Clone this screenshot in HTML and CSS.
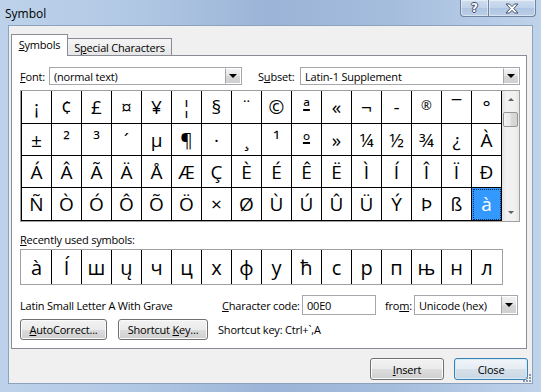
FILE: index.html
```html
<!DOCTYPE html>
<html lang="en">
<head>
    <meta charset="UTF-8">
    <meta name="viewport" content="width=device-width, initial-scale=1.0">
    <title>Symbol</title>
    <link rel="stylesheet" href="styles.css">
</head>
<body>
    <div class="window">

        <div class="titlebar">
            <span class="title">Symbol</span>
            <div class="caption-btns">
                <span class="cap help">?</span>
                <span class="cap close">
                    <svg width="14" height="11" viewBox="0 0 14 11">
                        <path d="M1 1h3.5L7 3.6 9.5 1H13L8.8 5.5 13 10H9.5L7 7.4 4.5 10H1l4.2-4.5z" fill="#fff" stroke="#3e4d66" stroke-width="1"/>
                    </svg>
                </span>
            </div>
        </div>

        <div class="client">
            <div class="tabs">
                <span class="tab active"><u>S</u>ymbols</span>
                <span class="tab">S<u>p</u>ecial Characters</span>
            </div>

            <div class="panel">
                <div class="font-row">
                    <span class="font-lbl"><u>F</u>ont:</span>
                    <div class="combo font-combo"><span>(normal text)</span><span class="drop"></span></div>
                    <span class="subset-lbl">S<u>u</u>bset:</span>
                    <div class="combo subset-combo"><span>Latin-1 Supplement</span><span class="drop"></span></div>
                </div>

                <div class="charmap">
                    <div class="cells">
                        <!-- fila 1 -->
                        <span>¡</span><span>¢</span><span>£</span><span>¤</span><span>¥</span><span>¦</span><span>§</span><span>¨</span>
                        <span>©</span><span class="ord">ª</span><span>«</span><span>¬</span><span>-</span><span class="small">®</span><span>¯</span><span>°</span>
                        <!-- fila 2 -->
                        <span>±</span><span>²</span><span>³</span><span>´</span><span>µ</span><span>¶</span><span>·</span><span>¸</span>
                        <span>¹</span><span class="ord">º</span><span>»</span><span>¼</span><span>½</span><span>¾</span><span>¿</span><span>À</span>
                        <!-- fila 3 -->
                        <span>Á</span><span>Â</span><span>Ã</span><span>Ä</span><span>Å</span><span>Æ</span><span>Ç</span><span>È</span>
                        <span>É</span><span>Ê</span><span>Ë</span><span>Ì</span><span>Í</span><span>Î</span><span>Ï</span><span>Ð</span>
                        <!-- fila 4 -->
                        <span>Ñ</span><span>Ò</span><span>Ó</span><span>Ô</span><span>Õ</span><span>Ö</span><span>×</span><span>Ø</span>
                        <span>Ù</span><span>Ú</span><span>Û</span><span>Ü</span><span>Ý</span><span>Þ</span><span>ß</span><span class="selected">à</span>
                    </div>
                    <div class="scrollbar">
                        <span class="arrow up"></span>
                        <span class="thumb"></span>
                        <span class="arrow down"></span>
                    </div>
                </div>

                <div class="recent-lbl"><u>R</u>ecently used symbols:</div>
                <div class="recent">
                    <span>à</span><span>Í</span><span>ш</span><span>ų</span><span>ч</span><span>ц</span><span>х</span><span>ф</span>
                    <span>у</span><span>ћ</span><span>с</span><span>р</span><span>п</span><span>њ</span><span>н</span><span>л</span>
                </div>

                <div class="info-row">
                    <span class="charname">Latin Small Letter A With Grave</span>
                    <span class="code-lbl"><u>C</u>haracter code:</span>
                    <div class="code-input">00E0</div>
                    <span class="from-lbl">fro<u>m</u>:</span>
                    <div class="combo from-combo"><span>Unicode (hex)</span><span class="drop"></span></div>
                </div>

                <div class="btn-row">
                    <button class="btn autocorrect"><u>A</u>utoCorrect...</button>
                    <button class="btn shortcut">Shortcut <u>K</u>ey...</button>
                    <span class="shortcut-text">Shortcut key: Ctrl+`,A</span>
                </div>
            </div>

            <div class="footer">
                <button class="btn big"><u>I</u>nsert</button>
                <button class="btn big default">Close</button>
            </div>

            <svg class="grip" width="10" height="10" viewBox="0 0 10 10">
                <g fill="#8a9bb2">
                    <rect x="7" y="1" width="2" height="2"/>
                    <rect x="4" y="4" width="2" height="2"/>
                    <rect x="7" y="4" width="2" height="2"/>
                    <rect x="1" y="7" width="2" height="2"/>
                    <rect x="4" y="7" width="2" height="2"/>
                    <rect x="7" y="7" width="2" height="2"/>
                </g>
            </svg>
        </div>
    </div>
</body>
</html>
```

FILE: styles.css
```css
body {
    margin: 0;
    font-family: "Open Sans", "Noto Sans", sans-serif;
    font-size: 11px;
    letter-spacing: -0.2px;
    color: #000;
}

.window {
    width: 541px;
    height: 392px;
    display: flex;
    flex-direction: column;
    background: linear-gradient(90deg, #bdd2ea 0%, #b1c8e4 25%, #9bb4d7 50%, #a5bddd 72%, #bfd3ea 100%);
    overflow: hidden;
}

/* barra de titulo */
.titlebar {
    height: 25px;
    flex: none;
    display: flex;
    align-items: center;
    padding: 0 5px;
}
.title {
    font-size: 12px;
    letter-spacing: 0;
    margin-top: 1px;
}
.caption-btns {
    margin-left: auto;
    align-self: flex-start;
    display: flex;
}
.cap {
    height: 17px;
    box-sizing: border-box;
    display: flex;
    align-items: center;
    justify-content: center;
    border: 1px solid #6f84a2;
    border-top: none;
    background: linear-gradient(#cfddef, #c0d2e9 50%, #aec4e1 51%, #bccfe7);
    box-shadow: inset 0 0 0 1px rgba(255,255,255,0.45);
}
.help {
    width: 28px;
    border-right: none;
    border-radius: 0 0 0 4px;
    color: #fff;
    font-family: "DejaVu Sans", sans-serif;
    font-weight: bold;
    font-size: 12px;
    text-shadow: 1px 0 #3e4d66, -1px 0 #3e4d66, 0 1px #3e4d66, 0 -1px #3e4d66;
}
.close {
    width: 48px;
    border-radius: 0 0 4px 0;
}

/* area cliente */
.client {
    position: relative;
    flex: 1;
    margin: 0 8px 8px;
    background: #f0f0f0;
    border: 1px solid #8da2be;
    display: flex;
    flex-direction: column;
}

.tabs {
    position: relative;
    z-index: 1;
    display: flex;
    align-items: flex-end;
    padding: 8px 0 0 2px;
    margin-bottom: -1px;
}
.tab {
    height: 17px;
    width: 104px;
    box-sizing: border-box;
    margin-bottom: 1px;
    display: flex;
    align-items: center;
    justify-content: center;
    border: 1px solid #898c95;
    border-left: none;
    border-bottom: none;
    background: linear-gradient(#f5f5f5, #e6e6e6);
}
.tab.active {
    width: 57px;
    height: 22px;
    margin-bottom: 0;
    border-left: 1px solid #898c95;
    background: #fff;
    padding-bottom: 2px;
}

.panel {
    margin: 0 5px 0 2px;
    border: 1px solid #898c95;
    background: #fff;
    padding: 11px 6px 8px 8px;
}

.font-row {
    display: flex;
    align-items: center;
    height: 18px;
}
.font-lbl {
    width: 29px;
}
.subset-lbl {
    width: 42px;
    margin-left: 16px;
}

.combo {
    height: 18px;
    box-sizing: border-box;
    display: flex;
    align-items: center;
    border: 1px solid #a5a7ad;
    background: #fff;
    padding-left: 4px;
}
.font-combo {
    width: 193px;
}
.subset-combo {
    width: 220px;
}
.drop {
    margin: 0 0 0 auto;
    width: 16px;
    height: 100%;
    box-sizing: border-box;
    border: 1px solid #fff;
    border-left: 1px solid #a5a7ad;
    background: linear-gradient(#f2f2f2, #e4e4e4 50%, #d6d6d6 51%, #d0d0d0);
    display: flex;
    align-items: center;
    justify-content: center;
}
.drop::after {
    content: "";
    border-left: 4px solid transparent;
    border-right: 4px solid transparent;
    border-top: 4px solid #000;
}

/* mapa de caracteres */
.charmap {
    display: flex;
    margin-top: 5px;
    border: 1px solid #a0a0a0;
    width: fit-content;
}
.cells {
    display: grid;
    grid-template-columns: repeat(16, 30px);
    grid-template-rows: 33px 32px 32px 33px;
    border-left: 1px solid #000;
}
.cells span {
    border-right: 1px solid #000;
    border-bottom: 1px solid #000;
    display: flex;
    align-items: center;
    justify-content: center;
    font-size: 19px;
    letter-spacing: 0;
}
.cells .small {
    font-size: 13px;
    align-items: flex-start;
    padding-top: 5px;
}
.cells .ord {
    text-decoration: underline;
    text-decoration-thickness: 2px;
    text-underline-offset: -5px;
}
.cells .selected {
    background: #3399ff;
    color: #fff;
    outline: 1px dotted #0b2c55;
    outline-offset: -2px;
}

.scrollbar {
    width: 17px;
    display: flex;
    flex-direction: column;
    align-items: center;
    background: linear-gradient(90deg, #e2e2e2, #f1f1f1 25%, #f1f1f1 75%, #e6e6e6);
}
.arrow {
    height: 17px;
    width: 17px;
    display: flex;
    align-items: center;
    justify-content: center;
}
.arrow::after {
    content: "";
    border-left: 3px solid transparent;
    border-right: 3px solid transparent;
}
.arrow.up::after {
    border-bottom: 3px solid #606060;
}
.arrow.down {
    margin-top: auto;
}
.arrow.down::after {
    border-top: 3px solid #606060;
}
.thumb {
    margin-top: 4px;
    width: 15px;
    height: 15px;
    box-sizing: border-box;
    border: 1px solid #979797;
    border-radius: 2px;
    background: linear-gradient(90deg, #f4f4f4, #e7e7e7 50%, #d9d9d9 51%, #d4d4d4);
}

/* recientes */
.recent-lbl {
    margin-top: 10px;
    margin-bottom: 1px;
    line-height: 16px;
}
.recent {
    display: flex;
    width: fit-content;
    height: 36px;
    box-sizing: border-box;
    border: 1px solid #a0a0a0;
    padding-left: 1px;
}
.recent span {
    width: 30px;
    box-sizing: border-box;
    border-right: 1px solid #000;
    display: flex;
    align-items: center;
    justify-content: center;
    font-size: 20px;
    letter-spacing: 0;
}
.recent span:last-child {
    border-right: none;
}

.info-row {
    display: flex;
    align-items: center;
    height: 20px;
    margin-top: 10px;
}
.charname {
    width: 202px;
}
.code-lbl {
    width: 80px;
}
.code-input {
    width: 74px;
    height: 20px;
    box-sizing: border-box;
    border: 1px solid #a5a7ad;
    background: #fff;
    padding-left: 4px;
    display: flex;
    align-items: center;
}
.from-lbl {
    width: 29px;
    margin-left: 9px;
}
.from-combo {
    width: 104px;
    height: 20px;
}

.btn-row {
    display: flex;
    align-items: center;
    height: 21px;
    margin-top: 4px;
}
.btn {
    height: 21px;
    padding: 0;
    font: inherit;
    letter-spacing: -0.2px;
    color: #000;
    border: 1px solid #707070;
    border-radius: 3px;
    background: linear-gradient(#f2f2f2, #ebebeb 50%, #dddddd 51%, #cfcfcf);
    box-shadow: inset 0 0 0 1px #fbfbfb;
}
.autocorrect {
    width: 87px;
}
.shortcut {
    width: 90px;
    margin-left: 11px;
}
.shortcut-text {
    margin-left: 10px;
}

.footer {
    display: flex;
    justify-content: flex-end;
    gap: 10px;
    margin-top: 9px;
    padding-right: 4px;
}
.btn.big {
    width: 74px;
    height: 22px;
}
.btn.default {
    border-color: #3c7fb1;
    background: linear-gradient(#f0f5f9, #e5ecf2 50%, #d5e0ea 51%, #cad7e3);
    box-shadow: inset 0 0 0 1px #d3ecfa;
}

.grip {
    position: absolute;
    right: 0;
    bottom: 0;
}
```
